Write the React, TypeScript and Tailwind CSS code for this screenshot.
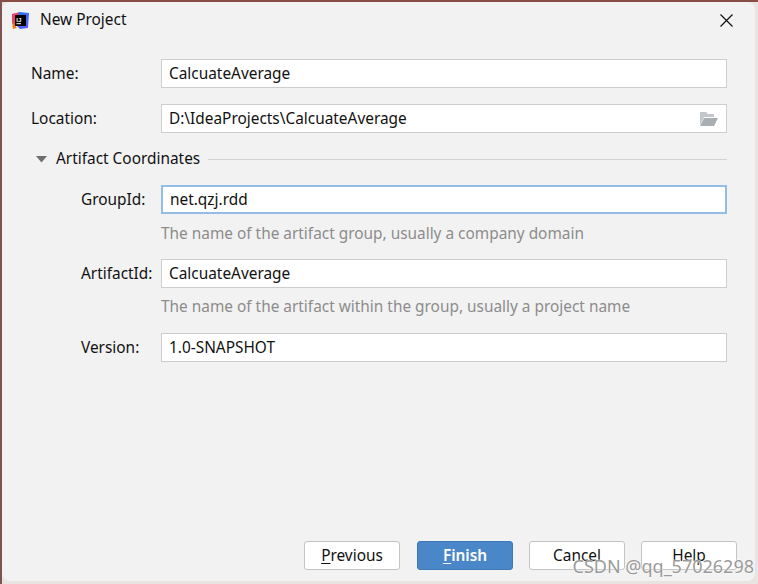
const font = { fontFamily: '"Segoe UI", "Noto Sans", "Open Sans", sans-serif' };

function IdeaLogo() {
  return (
    <svg width="19" height="19" viewBox="0 0 19 19">
      <defs>
        <linearGradient id="lg1" x1="0" y1="0" x2="1" y2="1">
          <stop offset="0" stopColor="#fc318c" />
          <stop offset="0.5" stopColor="#e34d4f" />
          <stop offset="1" stopColor="#f97a12" />
        </linearGradient>
        <linearGradient id="lg2" x1="0" y1="0" x2="1" y2="1">
          <stop offset="0" stopColor="#087cfa" />
          <stop offset="1" stopColor="#6b57ff" />
        </linearGradient>
      </defs>
      <path d="M1 3 L9 1 L12 6 L4 15 L1 12 Z" fill="url(#lg1)" />
      <path d="M8 1 L18 2 L17 17 L9 18 L5 14 Z" fill="url(#lg2)" />
      <path d="M1 11 L6 17 L2 18 Z" fill="#f97a12" />
      <rect x="4" y="4" width="11" height="11" fill="#000" />
      <text x="5.3" y="10.6" fill="#fff" fontSize="6" fontWeight="700" fontFamily="Liberation Sans, sans-serif">IJ</text>
      <rect x="5.5" y="12.2" width="4.5" height="1" fill="#fff" />
    </svg>
  );
}

function FolderIcon() {
  return (
    <svg width="20" height="16" viewBox="0 0 20 16">
      <path d="M1 1 H7 L9 3 H15 V6 H5 L1 14 Z" fill="#c3c7cb" />
      <path d="M5 7 H19 L15 15 H1 Z" fill="#a9aeb3" />
    </svg>
  );
}

function TextField({ value, focused, icon }: { value: string; focused?: boolean; icon?: boolean }) {
  return (
    <div
      className={`flex-1 h-[29px] bg-white flex items-center pl-[7px] pr-[7px] text-[15.4px] text-[#111] ${
        focused ? 'border-2 border-[#94bde6] pl-[6px]' : 'border border-[#cdcdcd]'
      }`}
    >
      <span className="flex-1">{value}</span>
      {icon && <FolderIcon />}
    </div>
  );
}

function Row({ label, value, indent, focused, icon }: { label: string; value: string; indent?: boolean; focused?: boolean; icon?: boolean }) {
  return (
    <div className="flex items-center">
      <div className={`w-[130px] shrink-0 text-[15.4px] text-[#111] ${indent ? 'pl-[50px]' : ''}`}>{label}</div>
      <TextField value={value} focused={focused} icon={icon} />
    </div>
  );
}

function Hint({ text }: { text: string }) {
  return <div className="pl-[130px] h-[20px] flex items-center text-[15.4px] text-[#8c8c8c]">{text}</div>;
}

function Btn({ children, primary }: { children: React.ReactNode; primary?: boolean }) {
  return (
    <button
      className={`w-[96px] h-[29px] rounded-[3px] text-[15.4px] flex items-center justify-center ${
        primary ? 'bg-[#4a87c8] border border-[#3f78b6] text-white font-semibold' : 'bg-white border border-[#c4c4c4] text-[#111]'
      }`}
    >
      {children}
    </button>
  );
}

export default function App() {
  return (
    <div className="w-[758px] h-[584px] bg-[#e9e4e2] pt-[2px] pl-[2px] pr-[3px] pb-[3px] relative overflow-hidden" style={font}>
      <div className="absolute left-0 top-0 w-full h-[2px] bg-[#8b4b47]" />
      <div className="absolute left-0 top-0 w-[2px] h-full bg-[#7e5450]" />
      <div className="w-full h-full bg-[#f2f2f2] rounded-[8px] flex flex-col relative">
        <div className="h-[36px] flex items-center pl-[9px] pr-[22px]">
          <IdeaLogo />
          <span className="ml-[10px] text-[15.4px] text-[#111]">New Project</span>
          <div className="flex-1" />
          <svg width="13" height="13" viewBox="0 0 13 13">
            <path d="M0.5 0.5 L12.5 12.5 M12.5 0.5 L0.5 12.5" stroke="#111" strokeWidth="1.2" />
          </svg>
        </div>
        <div className="pl-[29px] pr-[28px] pt-[21px] flex flex-col">
          <Row label="Name:" value="CalcuateAverage" />
          <div className="mt-[16px]">
            <Row label="Location:" value="D:\IdeaProjects\CalcuateAverage" icon />
          </div>
          <div className="mt-[16px] h-[20px] flex items-center">
            <svg width="11" height="7" viewBox="0 0 11 7" className="ml-[5px]">
              <path d="M0 0 H11 L5.5 6.5 Z" fill="#6e6e6e" />
            </svg>
            <span className="ml-[9px] text-[15.4px] text-[#111]">Artifact Coordinates</span>
            <div className="flex-1 ml-[8px] h-px bg-[#d3d3d3]" />
          </div>
          <div className="mt-[16px]">
            <Row label="GroupId:" value="net.qzj.rdd" indent focused />
          </div>
          <div className="mt-[10px]">
            <Hint text="The name of the artifact group, usually a company domain" />
          </div>
          <div className="mt-[15px]">
            <Row label="ArtifactId:" value="CalcuateAverage" indent />
          </div>
          <div className="mt-[9px]">
            <Hint text="The name of the artifact within the group, usually a project name" />
          </div>
          <div className="mt-[16px]">
            <Row label="Version:" value="1.0-SNAPSHOT" indent />
          </div>
        </div>
        <div className="flex-1" />
        <div className="flex justify-end gap-[16px] pr-[18px] pb-[11px]">
          <div className="mr-[1px]">
            <Btn><span className="underline underline-offset-2">P</span>revious</Btn>
          </div>
          <Btn primary><span className="underline underline-offset-2">F</span>inish</Btn>
          <Btn>Cancel</Btn>
          <Btn>Help</Btn>
        </div>
        <div
          className="absolute right-[1px] bottom-[1px] text-[18px] text-[#9a9a9a]"
          style={{ textShadow: '0 0 1px #fff, 0 0 2px #fff' }}
        >
          CSDN @qq_57026298
        </div>
      </div>
    </div>
  );
}
